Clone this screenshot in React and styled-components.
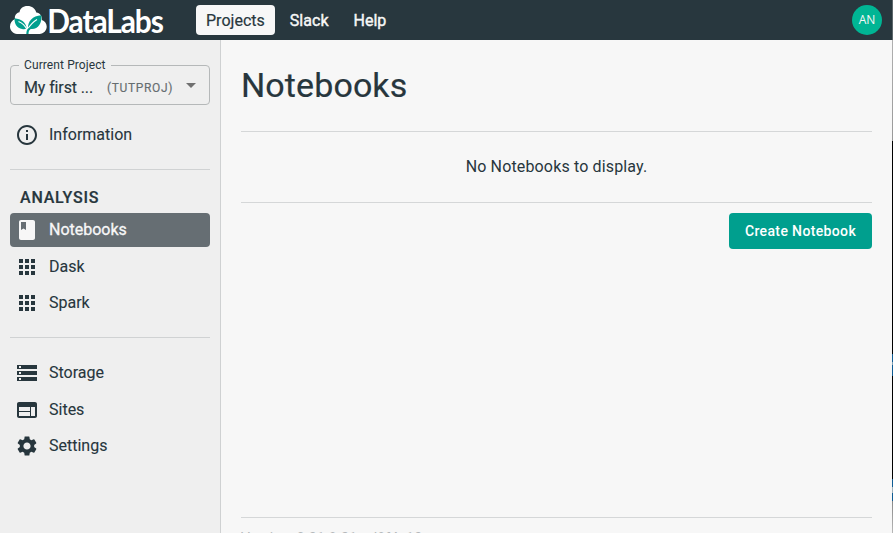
import React from 'react';
import styled, { createGlobalStyle } from 'styled-components';
import {
  MdInfoOutline,
  MdBook,
  MdApps,
  MdStorage,
  MdWeb,
  MdSettings,
  MdArrowDropDown,
} from 'react-icons/md';

const GlobalStyle = createGlobalStyle`
  *, *::before, *::after { box-sizing: border-box; }
  body {
    margin: 0;
    overflow: hidden;
    font-family: Roboto, "Liberation Sans", sans-serif;
    font-size: 16px;
    color: #27363d;
    background: #f7f7f7;
  }
`;

const Window = styled.div`
  display: grid;
  grid-template-columns: 1fr 1px;
  height: 100vh;
`;

const Screen = styled.div`
  display: flex;
  flex-direction: column;
  min-width: 0;
  overflow: hidden;
`;

const WindowEdge = styled.div`
  background: linear-gradient(
    #5c676b 0 40px, #b0b0b0 40px, #999 141px, #000 141px 354px,
    #0f5c94 354px 362px, #7f9fb5 362px 365px, #0f5c94 365px 376px,
    #000 376px 479px, #0f5c94 479px 487px, #9fb0ba 487px 493px,
    #0f5c94 493px 501px, #888 501px, #b8b8b8 533px
  );
`;

const TopBar = styled.header`
  display: flex;
  align-items: center;
  flex: 0 0 40px;
  padding: 0 10px;
  background: #28373e;
`;

const Logo = styled.svg`
  display: block;
  overflow: visible;
  width: 156px;
  height: 40px;
  margin-right: 30px;
`;

const Wordmark = styled.text`
  font: 700 33px Lato, sans-serif;
  letter-spacing: -1.2px;
  fill: #fff;
`;

const Nav = styled.nav`
  display: flex;
  flex: 1;
  gap: 5px;
`;

const NavLink = styled.a`
  height: 30px;
  padding: 1px 10px 0;
  border-radius: 4px;
  line-height: 30px;
  letter-spacing: 0.02px;
  color: ${(p) => (p.$active ? '#28373e' : '#f7f7f7')};
  background: ${(p) => (p.$active ? '#f7f7f7' : 'transparent')};
  -webkit-text-stroke: ${(p) => (p.$active ? '0.2px' : '0.4px')};
`;

const Avatar = styled.div`
  width: 30px;
  height: 30px;
  border-radius: 50%;
  background: #00b594;
  color: #f7f7f7;
  font: 400 12px/30px "Open Sans", sans-serif;
  text-align: center;
`;

const Body = styled.div`
  display: flex;
  flex: 1;
  min-height: 0;
`;

const Sidebar = styled.aside`
  flex: 0 0 221px;
  padding: 19px 10px 0;
  background: #efefef;
  border-right: 1px solid #cfd1d2;
`;

const ProjectSelect = styled.fieldset`
  display: flex;
  align-items: center;
  height: 46px;
  margin: 0;
  padding: 0 6px 1px 13px;
  border: 1px solid #b5b8b9;
  border-radius: 4px;
`;

const SelectLabel = styled.legend`
  margin-left: -5px;
  padding: 0 5px;
  height: 13px;
  font-size: 12px;
  line-height: 13px;
  letter-spacing: 0.1px;
`;

const ProjectName = styled.span`
  width: 83px;
  letter-spacing: -0.12px;
  -webkit-text-stroke: 0.15px;
`;

const ProjectKey = styled.span`
  flex: 1;
  font-size: 12px;
  letter-spacing: 0.65px;
  color: #666d70;
  -webkit-text-stroke: 0.15px;
`;

const SelectArrow = styled(MdArrowDropDown)`
  width: 24px;
  height: 24px;
  margin-top: -5px;
  color: #707070;
`;

const NavSection = styled.section`
  display: flex;
  flex-direction: column;
  gap: 2.5px;
  padding: ${(p) => p.$padding};
  border-bottom: ${(p) => (p.$last ? '0' : '1px solid #d0d2d3')};
`;

const SectionTitle = styled.h2`
  margin: 0;
  padding-left: 10px;
  height: 24.5px;
  font-size: 16px;
  font-weight: 500;
  line-height: 23px;
  letter-spacing: 0.8px;
  text-transform: uppercase;
  -webkit-text-stroke: 0.2px;
`;

const SidebarItem = styled.a`
  display: flex;
  align-items: center;
  gap: 10px;
  height: 34px;
  padding-left: 5px;
  border-radius: 4px;
  color: ${(p) => (p.$active ? '#f7f7f7' : '#27363d')};
  background: ${(p) => (p.$active ? '#666e73' : 'transparent')};
  -webkit-text-stroke: ${(p) => (p.$active ? '0.3px' : '0.1px')};

  svg {
    width: 24px;
    height: 24px;
  }
`;

const ItemLabel = styled.span`
  margin-top: -1px;
`;

const Content = styled.main`
  display: flex;
  flex: 1;
  flex-direction: column;
  padding: 0 20px;
`;

const PageTitle = styled.h1`
  margin: 0;
  height: 91px;
  font-size: 34px;
  font-weight: 400;
  line-height: 90px;
  letter-spacing: 0.1px;
  -webkit-text-stroke: 0.2px;
`;

const EmptyMessage = styled.p`
  margin: 0 0 10px;
  height: 72px;
  border: solid #d5d7d8;
  border-width: 1px 0;
  line-height: 70px;
  letter-spacing: 0.15px;
  text-align: center;
`;

const CreateButton = styled.button`
  align-self: flex-end;
  width: 143px;
  height: 36px;
  padding: 0;
  border: 0;
  border-radius: 4px;
  background: #009f8e;
  color: #fff;
  font: 500 14px Roboto, sans-serif;
  letter-spacing: 0.36px;
`;

const Footer = styled.footer`
  flex: 0 0 16px;
  margin-top: auto;
  border-top: 1px solid #d5d7d8;
  padding-top: 12px;
  overflow: hidden;
  white-space: nowrap;
  font-size: 14px;
  line-height: 16px;
  letter-spacing: 0.2px;
  color: #b4b8ba;
`;

const analysisItems = [
  { label: 'Notebooks', Icon: MdBook, active: true },
  { label: 'Dask', Icon: MdApps },
  { label: 'Spark', Icon: MdApps },
];

const manageItems = [
  { label: 'Storage', Icon: MdStorage },
  { label: 'Sites', Icon: MdWeb },
  { label: 'Settings', Icon: MdSettings },
];

function Item({ label, Icon, active }) {
  return (
    <SidebarItem $active={active}>
      <Icon />
      <ItemLabel>{label}</ItemLabel>
    </SidebarItem>
  );
}

function DataLabsLogo() {
  return (
    <Logo viewBox="0 0 156 40" aria-label="DataLabs">
      <path
        fill="#fff"
        d="M7 34C3 33.500 0 30.500 0 26.500c0-3.500 2-6.300 5-7.500-.7-3.500 1.500-6.200 4.500-6.700C9.800 8.700 13 6 17.500 6c4.500 0 7.700 2.600 8.800 6.500 3.700.5 6 3.700 5.500 7.500 3 1 4.900 3.500 4.900 6.600 0 4-3 7.200-7.200 7.400z"
      />
      <path
        fill="#009f8e"
        d="M4.500 18.200c7 .8 11.500 3.800 12.300 10.600-1.800.5-3.200.6-4.800.2C7 28.200 4.300 24 4.500 18.200z"
      />
      <path
        fill="#009f8e"
        d="M31.300 15.300c.9 8-3 13.700-9.300 13.700-1.400 0-2.600-.2-3.900-.6-.5-7.200 4.400-12.300 13.200-13.100z"
      />
      <path
        fill="none"
        stroke="#fff"
        strokeWidth="1.1"
        d="M8.500 21.500c3.500 1.500 6.500 4 8.500 8M27 19.500c-4 2.500-7 5.500-9.300 9.800"
      />
      <path
        fill="none"
        stroke="#009f8e"
        strokeWidth="2.200"
        d="M20 28.500c-1.800.8-2.600 2.500-2.600 5.500"
      />
      <Wordmark x="37.300" y="33" textLength="115.500" lengthAdjust="spacingAndGlyphs">
        DataLabs
      </Wordmark>
    </Logo>
  );
}

export default function App() {
  return (
    <>
      <GlobalStyle />
      <Window>
        <Screen>
          <TopBar>
            <DataLabsLogo />
            <Nav>
              <NavLink $active>Projects</NavLink>
              <NavLink>Slack</NavLink>
              <NavLink>Help</NavLink>
            </Nav>
            <Avatar>AN</Avatar>
          </TopBar>
          <Body>
            <Sidebar>
              <ProjectSelect>
                <SelectLabel>Current Project</SelectLabel>
                <ProjectName>My first ...</ProjectName>
                <ProjectKey>(TUTPROJ)</ProjectKey>
                <SelectArrow />
              </ProjectSelect>
              <NavSection $padding="13px 0 17px">
                <Item label="Information" Icon={MdInfoOutline} />
              </NavSection>
              <NavSection $padding="16px 0 17px">
                <SectionTitle>Analysis</SectionTitle>
                {analysisItems.map((item) => (
                  <Item key={item.label} {...item} />
                ))}
              </NavSection>
              <NavSection $padding="18px 0 0" $last>
                {manageItems.map((item) => (
                  <Item key={item.label} {...item} />
                ))}
              </NavSection>
            </Sidebar>
            <Content>
              <PageTitle>Notebooks</PageTitle>
              <EmptyMessage>No Notebooks to display.</EmptyMessage>
              <CreateButton>Create Notebook</CreateButton>
              <Footer>Version: 0.31.8-21-gd8f4e13</Footer>
            </Content>
          </Body>
        </Screen>
        <WindowEdge />
      </Window>
    </>
  );
}
